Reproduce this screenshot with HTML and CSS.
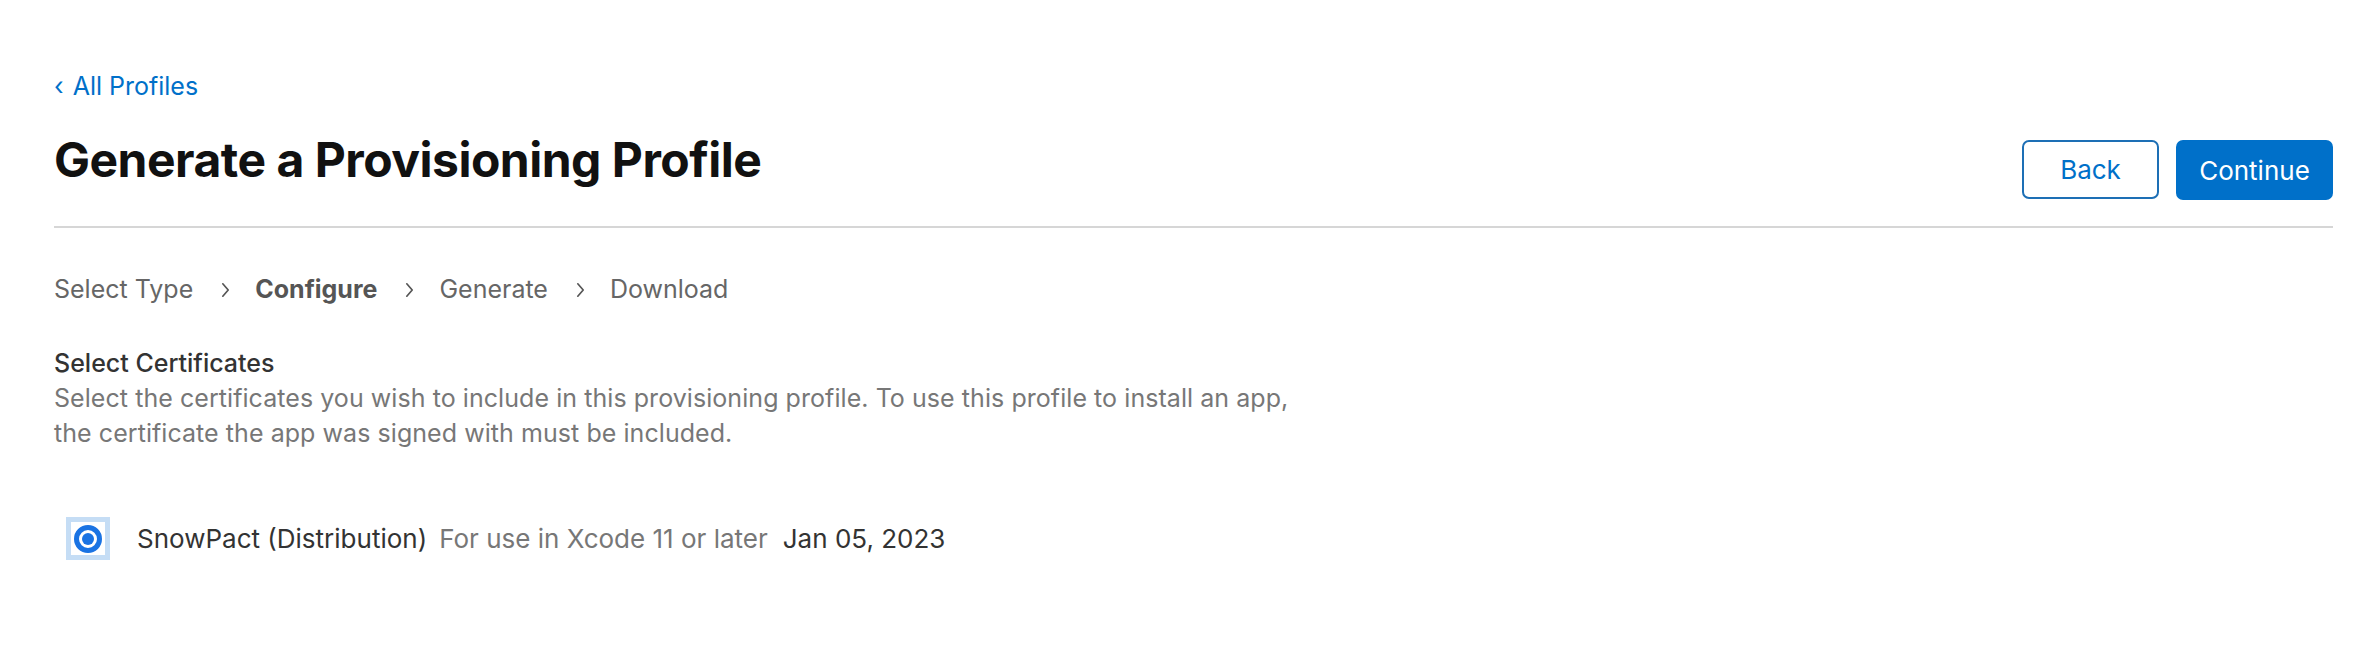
FILE: index.html
```html
<!DOCTYPE html>
<html lang="en">
<head>
<meta charset="utf-8">
<title>Generate a Provisioning Profile</title>
<link rel="stylesheet" href="styles.css">
</head>
<body>
<main class="page">
  <a class="back-link" href="#"><span class="back-chevron">‹</span> All Profiles</a>
  <header class="page-header">
    <h1 class="page-title">Generate a Provisioning Profile</h1>
    <div class="actions">
      <button class="btn btn-secondary" type="button">Back</button>
      <button class="btn btn-primary" type="button">Continue</button>
    </div>
  </header>
  <nav class="steps">
    <span class="step">Select Type</span>
    <span class="step-sep"><svg viewBox="0 0 9 16" width="9" height="16"><path d="M1.8 1.8 L7.2 8 L1.8 14.2" fill="none" stroke="currentColor" stroke-width="1.7" stroke-linecap="round" stroke-linejoin="round"/></svg></span>
    <span class="step step-current">Configure</span>
    <span class="step-sep"><svg viewBox="0 0 9 16" width="9" height="16"><path d="M1.8 1.8 L7.2 8 L1.8 14.2" fill="none" stroke="currentColor" stroke-width="1.7" stroke-linecap="round" stroke-linejoin="round"/></svg></span>
    <span class="step">Generate</span>
    <span class="step-sep"><svg viewBox="0 0 9 16" width="9" height="16"><path d="M1.8 1.8 L7.2 8 L1.8 14.2" fill="none" stroke="currentColor" stroke-width="1.7" stroke-linecap="round" stroke-linejoin="round"/></svg></span>
    <span class="step">Download</span>
  </nav>
  <section class="section">
    <h2 class="section-title">Select Certificates</h2>
    <p class="section-desc">Select the certificates you wish to include in this provisioning profile. To use this profile to install an app,<br>the certificate the app was signed with must be included.</p>
    <div class="cert-row">
      <span class="radio-focus"><span class="radio"><span class="radio-dot"></span></span></span>
      <span class="cert-name">SnowPact (Distribution)</span>
      <span class="cert-note">For use in Xcode 11 or later</span>
      <span class="cert-date">Jan 05, 2023</span>
    </div>
  </section>
</main>
</body>
</html>
```
FILE: styles.css
```css
html, body {
  margin: 0;
  padding: 0;
  background: #ffffff;
}
body {
  font-family: Inter, "Noto Sans", "Liberation Sans", sans-serif;
  color: #1d1d1f;
}
.page {
  width: 2279px;
  padding: 69px 0 40px 54px;
}
.back-link {
  display: inline-block;
  font-size: 25px;
  line-height: 35px;
  color: #0070c9;
  text-decoration: none;
}
.back-chevron {
  display: inline-block;
  margin-right: 2px;
}
.page-header {
  display: flex;
  justify-content: space-between;
  align-items: flex-start;
  border-bottom: 2px solid #d6d6d6;
  padding-bottom: 26px;
}
.page-title {
  margin: 27px 0 0 0;
  font-size: 48px;
  line-height: 58px;
  font-weight: 700;
  letter-spacing: -0.5px;
  color: #111111;
}
.actions {
  display: flex;
  gap: 17px;
  margin-top: 36px;
}
.btn {
  font-family: inherit;
  font-size: 26px;
  height: 60px;
  border-radius: 7px;
  padding: 0;
  cursor: pointer;
}
.btn-secondary {
  width: 137px;
  height: 59px;
  background: #ffffff;
  color: #0070c9;
  border: 2px solid #1d6fb5;
}
.btn-primary {
  width: 157px;
  background: #0070c9;
  color: #ffffff;
  border: none;
}
.steps {
  display: flex;
  align-items: center;
  margin-top: 44px;
  font-size: 25px;
  line-height: 35px;
  color: #666666;
}
.step-current {
  font-weight: 700;
  color: #555555;
}
.step-sep {
  display: flex;
  align-items: center;
  margin: 0 25px 0 28px;
  color: #555555;
}
.section {
  margin-top: 39px;
}
.section-title {
  margin: 0;
  font-size: 25px;
  line-height: 35px;
  font-weight: 500;
  color: #333333;
}
.section-desc {
  margin: 0;
  font-size: 25px;
  line-height: 35px;
  letter-spacing: 0.06px;
  color: #777777;
}
.cert-row {
  display: flex;
  align-items: center;
  margin-top: 66px;
  margin-left: 12px;
  font-size: 26px;
  line-height: 35px;
}
.radio-focus {
  display: flex;
  align-items: center;
  justify-content: center;
  width: 34px;
  height: 33px;
  border: 5px solid #c5ddf5;
  margin-right: 27px;
}
.radio {
  display: flex;
  align-items: center;
  justify-content: center;
  box-sizing: border-box;
  width: 28px;
  height: 28px;
  border-radius: 50%;
  border: 5px solid #1a73e3;
  background: #ffffff;
}
.radio-dot {
  width: 12px;
  height: 12px;
  border-radius: 50%;
  background: #1a73e3;
}
.cert-name {
  color: #333333;
}
.cert-note {
  color: #777777;
  margin-left: 12px;
}
.cert-date {
  color: #333333;
  margin-left: 15px;
}
```
